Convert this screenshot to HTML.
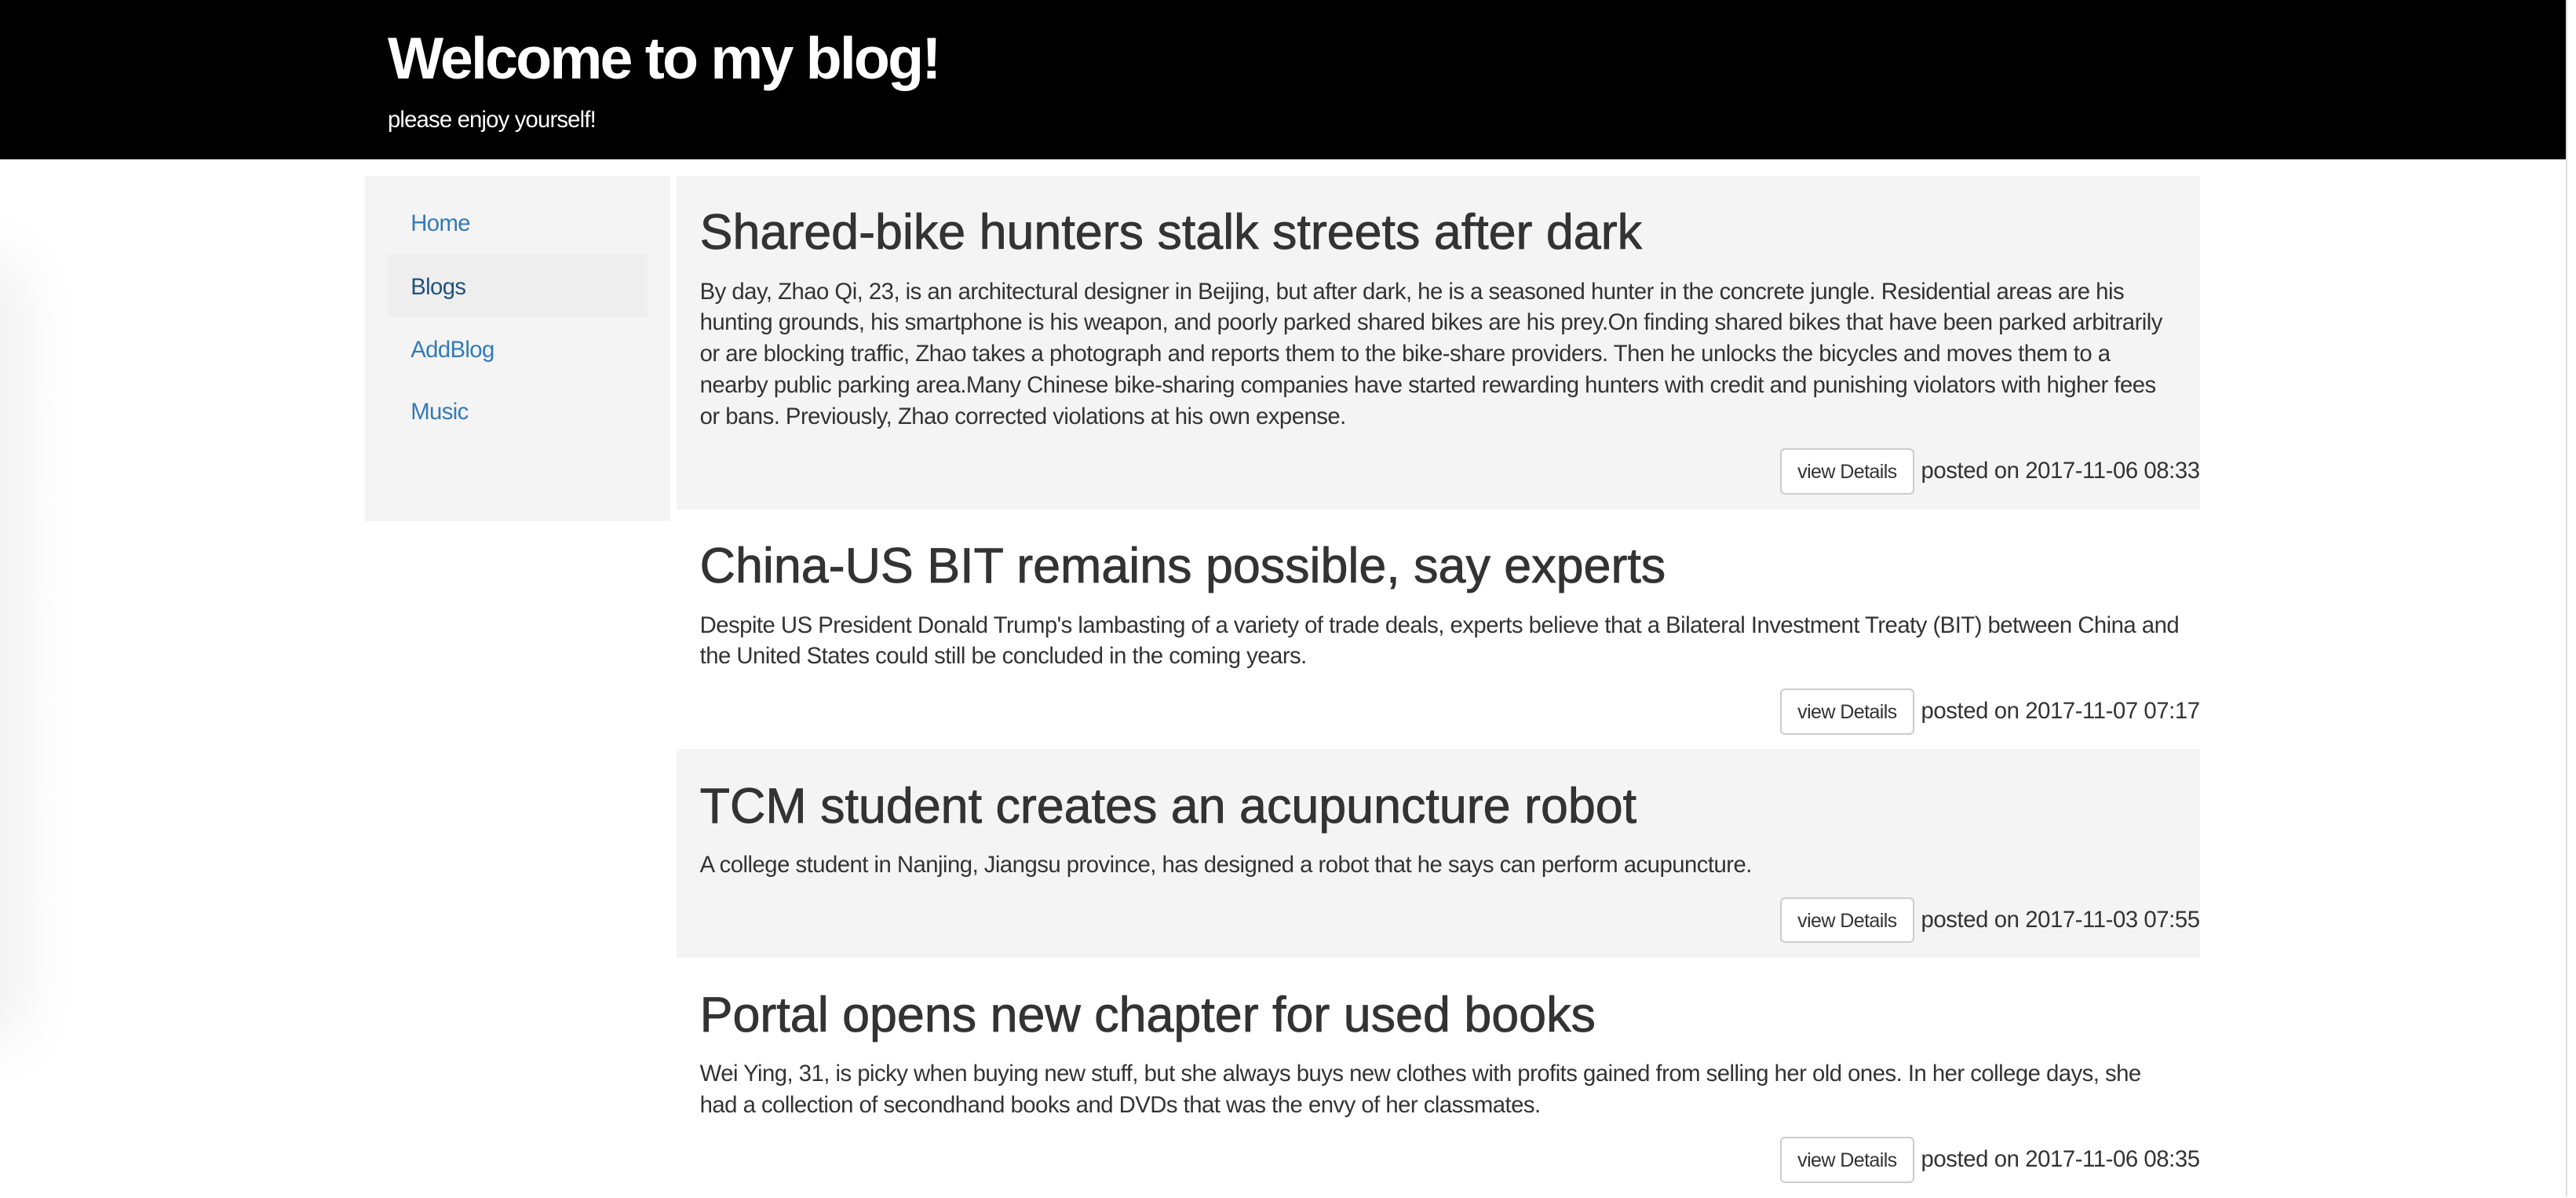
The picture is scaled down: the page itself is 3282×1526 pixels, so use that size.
<!DOCTYPE html>
<html><head><meta charset="utf-8"><style>
html{zoom:2.0931}
body{margin:0;width:1568px;height:728px;overflow:hidden;background:#fff;font-family:"Liberation Sans",Arial,sans-serif;color:#333;position:relative}
.hdr{position:absolute;left:0;top:0;width:1562px;height:97px;background:#000;color:#fff}
.hdr h1{position:absolute;left:236px;top:15px;margin:0;font-size:36px;line-height:42px;font-weight:bold;letter-spacing:-1.35px}
.hdr p{position:absolute;left:236px;top:64px;margin:0;font-size:14px;line-height:18px;letter-spacing:-0.4px}
.sb{position:absolute;left:1562px;top:0;width:6px;height:728px;background:#fff;border-left:1px solid #ddd}
.shadow{position:absolute;left:-40px;top:170px;width:40px;height:450px;box-shadow:0 0 40px 12px rgba(0,0,0,.07)}
.side{position:absolute;left:222px;top:107px;width:186px;height:210px;background:#f4f4f4}
.side a{position:absolute;left:14px;width:130px;height:38px;padding-left:14px;line-height:40px;font-size:14px;color:#337ab7;text-decoration:none;letter-spacing:-0.3px}
.side a.act{background:#eee;color:#23527c;width:144px}
.main{position:absolute;left:412px;top:107px;width:927px}
.post{box-sizing:border-box;padding:15px 0 0 14px}
.post.g{background:#f4f4f4}
.post h2{margin:0;font-size:30px;line-height:40px;font-weight:500;color:#333;letter-spacing:0;-webkit-text-stroke:0.4px #333}
.post p{margin:6px 0 0;font-size:14px;line-height:19px;letter-spacing:-0.25px;white-space:nowrap}
.ft{text-align:right;margin-top:10px;font-size:14px;height:27px;line-height:28px;letter-spacing:-0.2px}
.btn{display:inline-block;box-sizing:border-box;width:82px;height:28px;border:1px solid #ccc;border-radius:3px;background:#fff;font-size:12px;line-height:27px;text-align:center;vertical-align:top;margin-right:4px;color:#333;letter-spacing:-0.3px}
</style></head><body>
<div class="shadow"></div>
<div class="hdr"><h1>Welcome to my blog!</h1><p>please enjoy yourself!</p></div>
<div class="sb"></div>
<div class="side">
<a style="top:9px">Home</a>
<a class="act" style="top:48px">Blogs</a>
<a style="top:86px">AddBlog</a>
<a style="top:124px">Music</a>
</div>
<div class="main">
<div class="post g" style="height:203px">
<h2>Shared-bike hunters stalk streets after dark</h2>
<p>By day, Zhao Qi, 23, is an architectural designer in Beijing, but after dark, he is a seasoned hunter in the concrete jungle. Residential areas are his<br>hunting grounds, his smartphone is his weapon, and poorly parked shared bikes are his prey.On finding shared bikes that have been parked arbitrarily<br>or are blocking traffic, Zhao takes a photograph and reports them to the bike-share providers. Then he unlocks the bicycles and moves them to a<br>nearby public parking area.Many Chinese bike-sharing companies have started rewarding hunters with credit and punishing violators with higher fees<br>or bans. Previously, Zhao corrected violations at his own expense.</p>
<div class="ft"><span class="btn">view Details</span>posted on 2017-11-06 08:33</div>
</div>
<div class="post" style="height:146px">
<h2>China-US BIT remains possible, say experts</h2>
<p>Despite US President Donald Trump's lambasting of a variety of trade deals, experts believe that a Bilateral Investment Treaty (BIT) between China and<br>the United States could still be concluded in the coming years.</p>
<div class="ft"><span class="btn">view Details</span>posted on 2017-11-07 07:17</div>
</div>
<div class="post g" style="height:127px">
<h2>TCM student creates an acupuncture robot</h2>
<p>A college student in Nanjing, Jiangsu province, has designed a robot that he says can perform acupuncture.</p>
<div class="ft"><span class="btn">view Details</span>posted on 2017-11-03 07:55</div>
</div>
<div class="post" style="height:146px">
<h2>Portal opens new chapter for used books</h2>
<p>Wei Ying, 31, is picky when buying new stuff, but she always buys new clothes with profits gained from selling her old ones. In her college days, she<br>had a collection of secondhand books and DVDs that was the envy of her classmates.</p>
<div class="ft"><span class="btn">view Details</span>posted on 2017-11-06 08:35</div>
</div>
</div>
</body></html>
